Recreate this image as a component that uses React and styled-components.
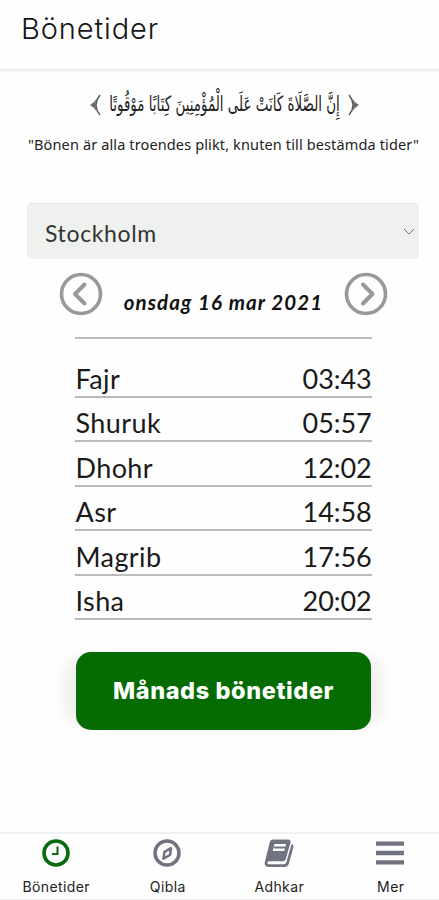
import React from "react";
import styled, { createGlobalStyle } from "styled-components";

const GlobalStyle = createGlobalStyle`
  *, *::before, *::after { box-sizing: border-box; }
  body { margin: 0; background: #fefefe; color: #1a1a1a; }
`;

const ButtonBase = styled.button`
  border: 0;
  padding: 0;
  background: none;
  cursor: pointer;
`;

const Screen = styled.div`
  width: 439px;
  height: 900px;
  display: flex;
  flex-direction: column;
  overflow: hidden;
  font-family: Lato, sans-serif;
`;

const Header = styled.header`
  height: 69px;
  flex: none;
  padding: 8px 21px 0;
  box-shadow: 0 1px 3px 1px #e9e9e9;
`;

const Title = styled.h1`
  margin: 0;
  font: 350 29px/42px Inter, sans-serif;
  letter-spacing: 0.9px;
  color: #151515;
`;

const Content = styled.main`
  flex: 1;
  display: flex;
  flex-direction: column;
  align-items: center;
`;

const VerseRow = styled.div`
  width: 269px;
  height: 39px;
  margin: 16px 0 0 10px;
  display: flex;
  align-items: center;
  justify-content: space-between;
`;

const Verse = styled.p`
  flex: 1;
  min-width: 0;
  display: flex;
  justify-content: center;
  margin: 0;
  font: 400 21px/39px "DejaVu Sans", sans-serif;
  white-space: nowrap;
  transform: scaleX(0.64);
  color: #222;
`;

const Quote = styled.p`
  margin: 7px 0 0 8px;
  height: 26px;
  font: 400 14.5px/26px "Noto Sans", sans-serif;
  letter-spacing: 0.13px;
  white-space: nowrap;
  color: #222;
`;

const CitySelect = styled(ButtonBase)`
  width: 392px;
  height: 56px;
  margin: 46px 0 0 7px;
  padding: 4px 4px 0 18px;
  display: flex;
  align-items: center;
  justify-content: space-between;
  border-radius: 5px;
  background: #eff1ee;
  box-shadow: inset 0 1px 0 #e4e6e4;
  font: 400 23px/30px Lato, sans-serif;
  letter-spacing: 0.65px;
  color: #333533;
`;

const DateRow = styled.div`
  width: 330px;
  height: 44px;
  margin: 13px 0 0 8px;
  display: flex;
  justify-content: space-between;
`;

const RoundButton = styled(ButtonBase)`
  width: 44px;
  height: 44px;
`;

const DateText = styled.time`
  padding-top: 17px;
  font: italic 700 20.5px/26px Lato, sans-serif;
  letter-spacing: 1.1px;
  white-space: nowrap;
  color: #111;
`;

const Times = styled.dl`
  width: 297px;
  margin: 21px 0 0 7px;
  border-top: 2px solid #bdbdbd;
  padding-top: 14px;
`;

const TimeRow = styled.div`
  height: 44.5px;
  padding: 0 0 0 1px;
  display: flex;
  align-items: flex-end;
  justify-content: space-between;
  border-bottom: 2px solid #bbb;
  font: 400 27px/34px Lato, sans-serif;
`;

const Name = styled.dt`
  letter-spacing: 0.4px;
`;

const Value = styled.dd`
  margin: 0;
  letter-spacing: -0.1px;
`;

const MonthButton = styled(ButtonBase)`
  width: 295px;
  height: 78px;
  margin: 32px 0 0 8px;
  border-radius: 15px;
  background: #046c02;
  box-shadow: 18px 0 18px -10px #e9e9e9, -18px 0 18px -10px #e9e9e9;
  font: 800 23.5px/74px Inter, sans-serif;
  letter-spacing: 0.6px;
  color: #fff;
`;

const TabBar = styled.nav`
  height: 68px;
  flex: none;
  display: grid;
  grid-template-columns: repeat(4, 111.5px);
  border-top: 2px solid #f1f1f1;
  border-bottom: 1px solid #f1f1f1;
`;

const Tab = styled(ButtonBase)`
  display: flex;
  flex-direction: column;
  align-items: center;
  padding-top: 5px;
  gap: 10px;
  color: ${(p) => (p.$active ? "#056b0c" : "#717480")};
`;

const TabIcon = styled.span`
  height: 28px;
  display: flex;
  align-items: center;
`;

const TabLabel = styled.span`
  padding-left: 1px;
  font: 400 14px/20px Inter, sans-serif;
  letter-spacing: 0.4px;
  color: #222;
`;

const OrnateMark = styled.svg`
  flex: none;
  transform: ${(p) => (p.$mirrored ? "scaleX(-1)" : "none")};
`;

const Ornament = ({ mirrored }) => (
  <OrnateMark $mirrored={mirrored} width="11" height="22" viewBox="0 0 11 22" aria-hidden="true">
    <path d="M10 1Q2 11 10 21" fill="none" stroke="#555" strokeWidth="1.300" />
    <path d="M7 4Q5 8 0 11q5 3 7 7Q4.500 11 7 4z" fill="#777" />
    <circle cx="4" cy="11" r="1.800" fill="#666" />
  </OrnateMark>
);

const Arrow = ({ next }) => (
  <svg width="44" height="44" viewBox="0 0 44 44" fill="none" stroke="#999">
    <circle cx="22" cy="22" r="19.5" strokeWidth="3.6" />
    <path d={next ? "M19 12.500L28.500 22 19 31.500" : "M25.500 12.500L16 22l9.500 9.500"} strokeWidth="4" strokeLinecap="round" strokeLinejoin="round" />
  </svg>
);

const Clock = () => (
  <svg width="28" height="28" viewBox="0 0 28 28" fill="none" stroke="currentColor">
    <circle cx="14" cy="14" r="12" strokeWidth="3.600" />
    <path d="M15.500 7.500v7.500h-5.500" strokeWidth="2" />
  </svg>
);

const Compass = () => (
  <svg width="28" height="28" viewBox="0 0 28 28" fill="none" stroke="currentColor">
    <circle cx="14" cy="14" r="12" strokeWidth="3.500" />
    <path d="M18 9.200l-1 6.800-6.500 3.600 1-6.800z" strokeWidth="2.500" strokeLinejoin="round" />
  </svg>
);

const Book = () => (
  <svg width="30" height="28" viewBox="0 0 30 28">
    <path d="M9 .5h15c2 0 3 1.200 2.500 3l-4.600 16.300c-.4 1.600-1.600 2.400-3.200 2.400H5.200c-2.400 0-2.600 3 .2 3h14.400c1.400 0 2.200-.7 2.600-2.200L27.600 5c1.600.4 2.200 1.600 1.800 3.200l-4.600 16.600c-.6 2-1.900 3.100-4 3.100H4.700c-3.200 0-4.700-2.300-3.800-5.200L5.800 3.200C6.300 1.500 7.300.5 9 .5z" fill="currentColor" />
    <path d="M10.500 5h11.500l-1.800 7H8.700z" fill="#fff" />
    <path d="M9.800 8.500h11.500" stroke="currentColor" strokeWidth="2" />
  </svg>
);

const Menu = () => (
  <svg width="28" height="28" viewBox="0 0 28 28" stroke="currentColor" strokeWidth="4.400">
    <path d="M0 4.600h28M0 14h28M0 23.400h28" />
  </svg>
);

const times = [
  ["Fajr", "03:43"],
  ["Shuruk", "05:57"],
  ["Dhohr", "12:02"],
  ["Asr", "14:58"],
  ["Magrib", "17:56"],
  ["Isha", "20:02"],
];

const tabs = [
  ["Bönetider", Clock],
  ["Qibla", Compass],
  ["Adhkar", Book],
  ["Mer", Menu],
];

export default function App() {
  return (
    <Screen>
      <GlobalStyle />
      <Header><Title>Bönetider</Title></Header>
      <Content>
        <VerseRow>
          <Ornament />
          <Verse dir="rtl" lang="ar">إِنَّ الصَّلَاةَ كَانَتْ عَلَى الْمُؤْمِنِينَ كِتَابًا مَوْقُوتًا</Verse>
          <Ornament mirrored />
        </VerseRow>
        <Quote>"Bönen är alla troendes plikt, knuten till bestämda tider"</Quote>
        <CitySelect>
          Stockholm
          <svg width="12" height="8" viewBox="0 0 12 8" fill="none" stroke="#777"><path d="M1 0l5 5 5-5" /></svg>
        </CitySelect>
        <DateRow>
          <RoundButton aria-label="Föregående dag"><Arrow /></RoundButton>
          <DateText>onsdag 16 mar 2021</DateText>
          <RoundButton aria-label="Nästa dag"><Arrow next /></RoundButton>
        </DateRow>
        <Times>
          {times.map(([name, time]) => (
            <TimeRow key={name}><Name>{name}</Name><Value>{time}</Value></TimeRow>
          ))}
        </Times>
        <MonthButton>Månads bönetider</MonthButton>
      </Content>
      <TabBar>
        {tabs.map(([label, Icon], i) => (
          <Tab key={label} $active={i === 0}>
            <TabIcon><Icon /></TabIcon>
            <TabLabel>{label}</TabLabel>
          </Tab>
        ))}
      </TabBar>
    </Screen>
  );
}
